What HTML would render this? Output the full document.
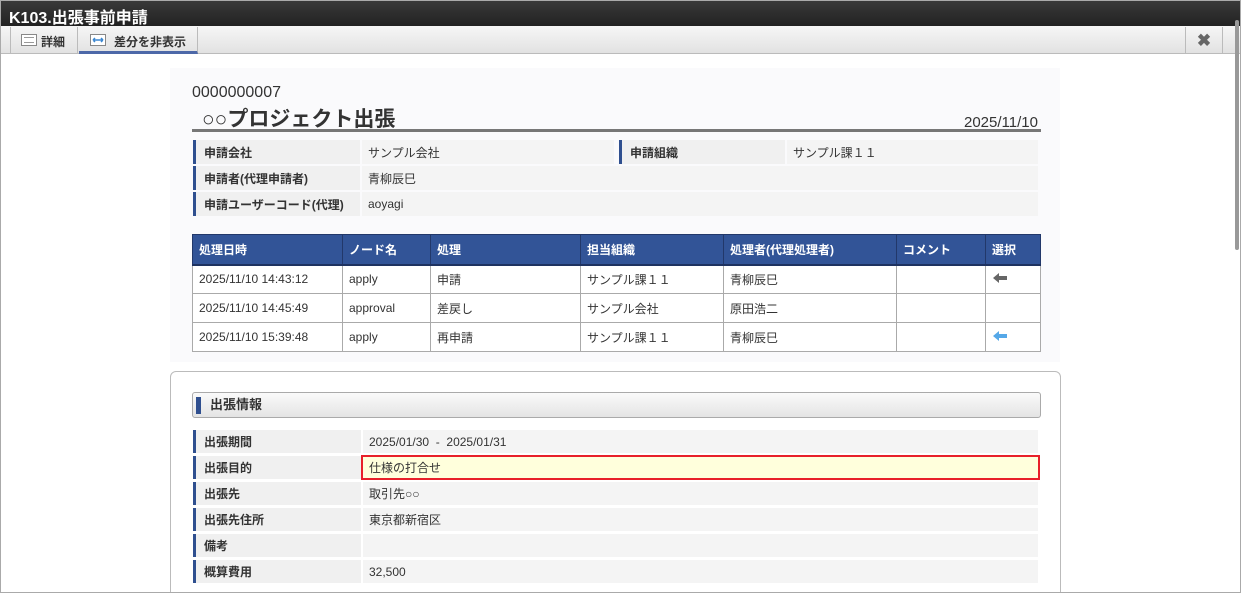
<!DOCTYPE html><html><head><meta charset="utf-8"><style>
*{box-sizing:border-box;margin:0;padding:0}
html,body{width:1241px;height:593px;overflow:hidden}
body{font-family:"Liberation Sans","Noto Sans CJK JP",sans-serif;background:#fff;position:relative;color:#333}
.a{position:absolute}
.lab{position:absolute;background:#f0f0f0;border-left:3px solid #2f4f8f;font-weight:bold;font-size:12px;padding-left:8px;display:flex;align-items:center;color:#333}
.val{position:absolute;background:#f4f4f4;font-size:12px;padding-left:6px;display:flex;align-items:center;color:#333}
table{border-collapse:collapse;position:absolute;left:192px;top:234px;width:849px;font-size:12px}
th{background:#325497;color:#fff;text-align:left;padding-left:6px;height:30px;border:1px solid #22386a;border-bottom:2px solid #1e3260;font-weight:bold}
td{border:1px solid #aaa;padding-left:6px;height:29px;background:#fff}
</style></head><body>
<div class="a" style="left:0;top:0;width:1241px;height:593px;border:1px solid #aaa;z-index:9;pointer-events:none"></div>
<div class="a" style="left:0;top:0;width:1241px;height:26px;background:linear-gradient(#3a3a3a,#222);color:#fff;font-weight:bold;font-size:16px;padding:4px 0 0 9px">K103.出張事前申請</div>
<div class="a" style="left:0;top:26px;width:1241px;height:28px;background:linear-gradient(#f6f6f6,#e2e2e2);border-bottom:1px solid #bbb"></div>
<div class="a" style="left:10px;top:27px;width:68px;height:27px;border-left:1px solid #bbb;border-right:1px solid #bbb;font-size:12px;font-weight:bold;padding:6px 0 0 30px">詳細</div>
<div class="a" style="left:21px;top:34px;width:16px;height:12px;border:1px solid #888;background:#fff"></div>
<div class="a" style="left:24px;top:37px;width:10px;height:6px;border-top:1px solid #999;border-bottom:1px solid #999"></div>
<div class="a" style="left:79px;top:27px;width:119px;height:27px;border-right:1px solid #bbb;border-bottom:3px solid #4d68a8;font-size:12px;font-weight:bold;padding:6px 0 0 35px">差分を非表示</div>
<svg class="a" style="left:90px;top:34px" width="16" height="12"><rect x="0.5" y="0.5" width="15" height="11" fill="#fff" stroke="#888"/><path d="M3 6H13M3 6l2-2M3 6l2 2M13 6l-2-2M13 6l-2 2" stroke="#3a86d0" stroke-width="1.5" fill="none"/></svg>
<div class="a" style="left:1185px;top:27px;width:38px;height:27px;border-left:1px solid #bbb;border-right:1px solid #bbb;color:#666;font-size:17px;font-weight:bold;text-align:center;line-height:27px">✖</div>
<div class="a" style="left:1235px;top:20px;width:4px;height:230px;background:#999;border-radius:2px"></div>
<div class="a" style="left:170px;top:68px;width:890px;height:294px;background:#fafafc"></div>
<div class="a" style="left:192px;top:84px;font-size:16px">0000000007</div>
<div class="a" style="left:192px;top:107px;width:849px;height:25px;border-bottom:3px solid #777;font-size:21px;font-weight:bold;padding-left:10px;line-height:25px">○○プロジェクト出張</div>
<div class="a" style="left:964px;top:114px;font-size:15px">2025/11/10</div>
<div class="lab" style="left:193px;top:140px;width:167px;height:24px">申請会社</div>
<div class="val" style="left:362px;top:140px;width:252px;height:24px">サンプル会社</div>
<div class="lab" style="left:619px;top:140px;width:166px;height:24px">申請組織</div>
<div class="val" style="left:787px;top:140px;width:251px;height:24px">サンプル課１１</div>
<div class="lab" style="left:193px;top:166px;width:167px;height:24px">申請者(代理申請者)</div>
<div class="val" style="left:362px;top:166px;width:676px;height:24px">青柳辰巳</div>
<div class="lab" style="left:193px;top:192px;width:167px;height:24px">申請ユーザーコード(代理)</div>
<div class="val" style="left:362px;top:192px;width:676px;height:24px">aoyagi</div>
<table>
<tr><th style="width:150px">処理日時</th><th style="width:88px">ノード名</th><th style="width:150px">処理</th><th style="width:143px">担当組織</th><th style="width:173px">処理者(代理処理者)</th><th style="width:89px">コメント</th><th>選択</th></tr>
<tr><td>2025/11/10 14:43:12</td><td>apply</td><td>申請</td><td>サンプル課１１</td><td>青柳辰巳</td><td></td><td><svg width="16" height="12"><path d="M1 6L7 1V4H15V8H7V11Z" fill="#666"/></svg></td></tr>
<tr><td>2025/11/10 14:45:49</td><td>approval</td><td>差戻し</td><td>サンプル会社</td><td>原田浩二</td><td></td><td></td></tr>
<tr><td>2025/11/10 15:39:48</td><td>apply</td><td>再申請</td><td>サンプル課１１</td><td>青柳辰巳</td><td></td><td><svg width="16" height="12"><path d="M1 6L7 1V4H15V8H7V11Z" fill="#55a8e8"/></svg></td></tr>
</table>
<div class="a" style="left:170px;top:371px;width:891px;height:240px;border:1px solid #bbb;border-radius:6px;background:#fff"></div>
<div class="a" style="left:192px;top:392px;width:849px;height:26px;border:1px solid #aaa;border-radius:3px;background:linear-gradient(#fafafa,#e4e4e4);font-weight:bold;font-size:13px;line-height:24px;padding-left:17px">出張情報</div>
<div class="a" style="left:196px;top:397px;width:5px;height:17px;background:#2f4f8f"></div>
<div class="lab" style="left:193px;top:430px;width:168px;height:23px">出張期間</div>
<div class="val" style="left:363px;top:430px;width:675px;height:23px">2025/01/30 &nbsp;- &nbsp;2025/01/31</div>
<div class="lab" style="left:193px;top:456px;width:168px;height:23px">出張目的</div>
<div class="val" style="left:361px;top:455px;width:679px;height:25px;background:#ffffdc;border:2px solid #e8202a">仕様の打合せ</div>
<div class="lab" style="left:193px;top:482px;width:168px;height:23px">出張先</div>
<div class="val" style="left:363px;top:482px;width:675px;height:23px">取引先○○</div>
<div class="lab" style="left:193px;top:508px;width:168px;height:23px">出張先住所</div>
<div class="val" style="left:363px;top:508px;width:675px;height:23px">東京都新宿区</div>
<div class="lab" style="left:193px;top:534px;width:168px;height:23px">備考</div>
<div class="val" style="left:363px;top:534px;width:675px;height:23px"></div>
<div class="lab" style="left:193px;top:560px;width:168px;height:23px">概算費用</div>
<div class="val" style="left:363px;top:560px;width:675px;height:23px">32,500</div>
</body></html>
